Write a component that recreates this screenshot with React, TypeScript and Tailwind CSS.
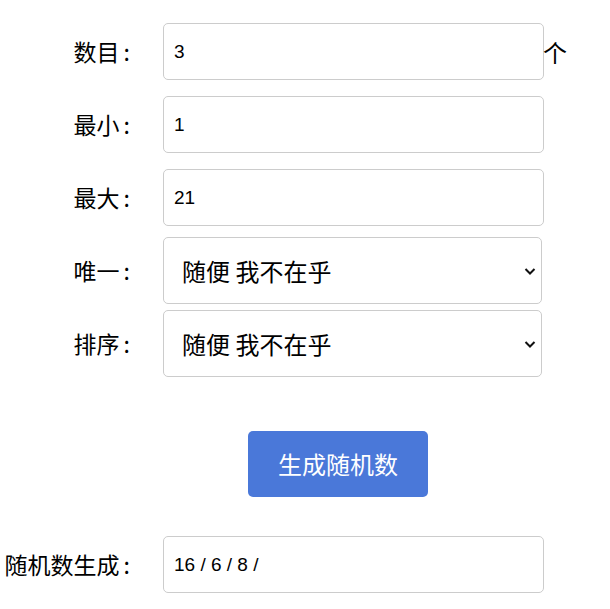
import React from "react";

const font = { fontFamily: '"Noto Sans CJK SC", "Noto Sans", sans-serif' };

function Label({ text }: { text: string }) {
  return (
    <div className="flex w-[133px] shrink-0 items-center justify-end pr-[3px] text-[23px] leading-none text-black whitespace-nowrap">
      <span>{text}</span>
      <span className="ml-[4px]">:</span>
    </div>
  );
}

function TextRow({ label, value, suffix }: { label: string; value: string; suffix?: string }) {
  return (
    <div className="flex items-center">
      <Label text={label} />
      <div className="ml-[30px] flex items-center">
        <input
          readOnly
          value={value}
          className="h-[57px] w-[381px] rounded-[5px] border border-[#cccccc] bg-white px-[10px] text-[19px] text-black outline-none"
          style={{ fontFamily: '"Liberation Sans", Arial, sans-serif' }}
        />
        {suffix && <span className="-ml-[1px] text-[24px] leading-none text-black">{suffix}</span>}
      </div>
    </div>
  );
}

function SelectRow({ label }: { label: string }) {
  return (
    <div className="flex items-center">
      <Label text={label} />
      <div className="relative ml-[30px]">
        <select
          className="h-[67px] w-[379px] appearance-none rounded-[5px] border border-[#cccccc] bg-white pl-[18px] text-[24px] text-black outline-none"
          style={font}
          defaultValue="a"
        >
          <option value="a">随便 我不在乎</option>
        </select>
        <svg
          className="pointer-events-none absolute right-[5px] top-1/2 -translate-y-1/2"
          width="14"
          height="14"
          viewBox="0 0 14 14"
        >
          <path d="M2.5 5 L7 9.5 L11.5 5" fill="none" stroke="#111" strokeWidth="2" />
        </svg>
      </div>
    </div>
  );
}

export default function App() {
  return (
    <div className="min-h-[609px] w-[610px] bg-white" style={font}>
      <div className="flex flex-col pt-[23px]">
        <TextRow label="数目" value="3" suffix="个" />
        <div className="mt-[16px]">
          <TextRow label="最小" value="1" />
        </div>
        <div className="mt-[16px]">
          <TextRow label="最大" value="21" />
        </div>
        <div className="mt-[11px]">
          <SelectRow label="唯一" />
        </div>
        <div className="mt-[6px]">
          <SelectRow label="排序" />
        </div>
        <div className="mt-[54px] flex justify-center pl-[66px]">
          <button className="h-[66px] w-[180px] rounded-[5px] bg-[#4a78d9] text-[24px] text-white">
            生成随机数
          </button>
        </div>
        <div className="mt-[39px]">
          <TextRow label="随机数生成" value="16 / 6 / 8 /" />
        </div>
      </div>
    </div>
  );
}
